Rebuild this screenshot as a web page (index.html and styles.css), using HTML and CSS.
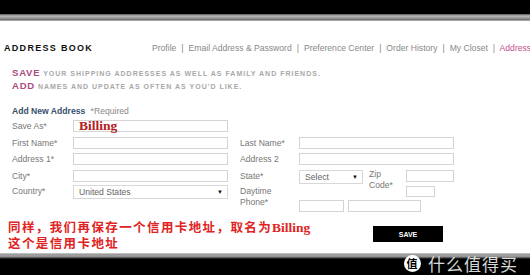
FILE: index.html
```html
<!DOCTYPE html>
<html lang="en">
<head>
    <meta charset="UTF-8">
    <title>Address Book</title>
    <link rel="stylesheet" href="styles.css">
</head>
<body>

    <div class="bar-top"></div>

    <div class="page">

        <!-- Header -->
        <div class="header">
            <h1>ADDRESS BOOK</h1>
            <div class="nav">
                <a>Profile</a> <span class="sep">|</span>
                <a>Email Address &amp; Password</a> <span class="sep">|</span>
                <a>Preference Center</a> <span class="sep">|</span>
                <a>Order History</a> <span class="sep">|</span>
                <a>My Closet</a> <span class="sep">|</span>
                <a class="current">Address Book</a>
            </div>
        </div>

        <div class="tagline">
            <p><b>SAVE</b> YOUR SHIPPING ADDRESSES AS WELL AS FAMILY AND FRIENDS.</p>
            <p><b>ADD</b> NAMES AND UPDATE AS OFTEN AS YOU'D LIKE.</p>
        </div>

        <!-- Form -->
        <div class="form-title">Add New Address <span>*Required</span></div>

        <div class="row">
            <label class="lab">Save As*</label>
            <div class="box wide">
                <span class="note-en">Billing</span>
            </div>
        </div>

        <div class="row">
            <label class="lab">First Name*</label>
            <div class="box wide"></div>
            <label class="lab2">Last Name*</label>
            <div class="box wide"></div>
        </div>

        <div class="row">
            <label class="lab">Address 1*</label>
            <div class="box wide"></div>
            <label class="lab2">Address 2</label>
            <div class="box wide"></div>
        </div>

        <div class="row">
            <label class="lab">City*</label>
            <div class="box wide"></div>
            <label class="lab2">State*</label>
            <div class="select state">Select <span class="arrow">&#9660;</span></div>
            <label class="zip-lab">Zip<br>Code*</label>
            <div class="box zip"></div>
        </div>

        <div class="row row-last">
            <label class="lab">Country*</label>
            <div class="select wide">United States <span class="arrow">&#9660;</span></div>
            <label class="lab2 two">Daytime<br>Phone*</label>
            <div class="phone">
                <div class="box ext"></div>
                <div class="phone-row">
                    <div class="box area"></div>
                    <div class="box number"></div>
                </div>
            </div>
        </div>

        <!-- Annotation + button -->
        <div class="bottom">
            <div class="note">
                <p>同样，我们再保存一个信用卡地址，取名为<span class="en">Billing</span></p>
                <p>这个是信用卡地址</p>
            </div>
            <button type="button">SAVE</button>
        </div>

    </div>

    <div class="bar-bottom"></div>

    <div class="watermark">
        <span class="logo">值</span>什么值得买
    </div>

</body>
</html>
```

FILE: styles.css
```css
body {
    margin: 0;
    padding: 0;
    width: 530px;
    height: 275px;
    overflow: hidden;
    position: relative;
    background: #fff;
    font-family: "Liberation Sans", Arial, sans-serif;
    color: #777;
}
p {
    margin: 0;
}
.bar-top {
    height: 21px;
    background: linear-gradient(#000 0, #000 14px, #555 14px, #b8b8b8 16px, #9a9a9a 18px, #6a6a6a 20px, #ddd 21px);
}
.bar-bottom {
    height: 22px;
    background: linear-gradient(#cfcfcf 0, #8a8a8a 2px, #b0b0b0 3px, #444 5px, #000 6px, #000 22px);
}
.page {
    height: 232px;
    overflow: hidden;
}
.header {
    display: flex;
    align-items: center;
    margin-top: 21px;
    height: 12px;
    white-space: nowrap;
    overflow: hidden;
}
h1 {
    margin: 0 0 0 4px;
    width: 148px;
    flex: none;
    font-size: 9px;
    letter-spacing: 1.3px;
    color: #111;
}
.nav {
    font-size: 8.6px;
    color: #888;
}
.nav .sep {
    margin: 0 2.6px;
}
.nav .current {
    color: #c0508e;
}
.tagline {
    margin: 13px 0 0 12px;
    font-size: 7px;
    font-weight: bold;
    letter-spacing: 1px;
    line-height: 12px;
    color: #a8a8a8;
}
.tagline b {
    font-size: 9.5px;
    letter-spacing: 0.8px;
    color: #ad4a80;
}
.form-title {
    margin: 12px 0 1px 12px;
    height: 12px;
    line-height: 12px;
    font-size: 8.6px;
    font-weight: bold;
    color: #35516b;
}
.form-title span {
    margin-left: 3px;
    font-weight: normal;
    color: #888;
}
.row {
    display: flex;
    align-items: center;
    height: 16.6px;
    padding-left: 12px;
    font-size: 8.6px;
}
.lab {
    width: 61px;
    flex: none;
}
.lab2 {
    width: 59px;
    margin-left: 12px;
    flex: none;
}
.box {
    height: 12px;
    box-sizing: border-box;
    border: 1px solid #d4d4d4;
    background: #fff;
    flex: none;
}
.wide {
    width: 155px;
}
.select {
    height: 14px;
    box-sizing: border-box;
    border: 1px solid #d8d8d8;
    display: flex;
    align-items: center;
    justify-content: space-between;
    padding: 0 4px 0 5px;
    font-size: 8.6px;
    color: #666;
    flex: none;
}
.arrow {
    font-size: 6px;
    color: #111;
}
.state {
    width: 64px;
    margin-top: 1px;
}
.zip-lab {
    width: 37px;
    margin-left: 6px;
    line-height: 11px;
    margin-top: 8px;
    flex: none;
}
.zip {
    width: 48px;
}
.note-en {
    position: relative;
    top: -3px;
    left: 5px;
    font-family: "Liberation Serif", "Times New Roman", serif;
    font-weight: bold;
    font-size: 13.5px;
    color: #b42020;
}
.row-last {
    height: 28px;
    align-items: flex-start;
}
.row-last .lab {
    margin-top: 2px;
}
.row-last .select {
    margin-top: 1px;
}
.two {
    line-height: 11px;
    margin-top: 2px;
}
.phone {
    display: flex;
    flex-direction: column;
    align-items: flex-end;
    width: 155px;
    padding-top: 2px;
}
.ext {
    width: 29px;
    margin-right: 19px;
    height: 11px;
}
.phone-row {
    display: flex;
    gap: 4px;
    width: 155px;
    margin-top: 3px;
}
.area {
    width: 45px;
}
.number {
    width: 73px;
}
.bottom {
    display: flex;
    align-items: flex-start;
    margin-top: 7px;
    padding-left: 8px;
}
.note {
    width: 365px;
    flex: none;
    font-family: "Noto Sans CJK SC", sans-serif;
    font-weight: bold;
    font-size: 12.5px;
    letter-spacing: 1.4px;
    line-height: 15px;
    color: #e02424;
}
.note .en {
    font-family: "Liberation Serif", serif;
    font-size: 13.5px;
    letter-spacing: 0;
}
button {
    width: 70px;
    height: 16px;
    margin-top: 7px;
    padding: 0;
    border: none;
    background: #000;
    color: #fff;
    font-family: "Liberation Sans", Arial, sans-serif;
    font-weight: bold;
    font-size: 7px;
}
.watermark {
    position: absolute;
    left: 404px;
    top: 254px;
    display: flex;
    align-items: center;
    font-family: "Noto Sans CJK SC", sans-serif;
    font-size: 17px;
    line-height: 19px;
    letter-spacing: 1px;
    color: rgba(255, 255, 255, 0.85);
}
.logo {
    width: 17px;
    height: 17px;
    border-radius: 50%;
    background: #fff;
    color: #000;
    font-size: 11px;
    line-height: 17px;
    text-align: center;
    font-weight: bold;
    margin-right: 7px;
}
```
